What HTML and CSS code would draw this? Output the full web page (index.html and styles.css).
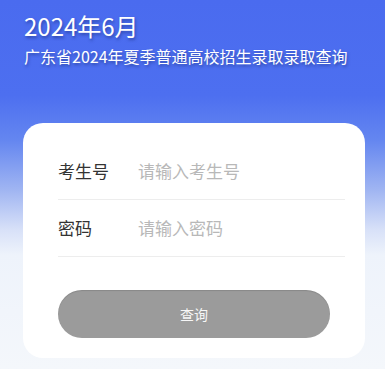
FILE: index.html
```html
<!DOCTYPE html>
<html lang="zh-CN">
<head>
<meta charset="utf-8">
<link rel="stylesheet" href="styles.css">
</head>
<body>
<div class="page">
  <header class="header">
    <h1 class="title">2024年6月</h1>
    <p class="subtitle">广东省2024年夏季普通高校招生录取录取查询</p>
  </header>
  <main class="card">
    <div class="field">
      <span class="label">考生号</span>
      <span class="placeholder">请输入考生号</span>
    </div>
    <div class="field">
      <span class="label">密码</span>
      <span class="placeholder">请输入密码</span>
    </div>
    <div class="actions">
      <button class="btn" type="button">查询</button>
    </div>
  </main>
</div>
</body>
</html>
```

FILE: styles.css
```css
* { box-sizing: border-box; }
html, body { margin: 0; padding: 0; }
body {
  width: 385px;
  height: 369px;
  overflow: hidden;
  font-family: "Noto Sans CJK SC", "Noto Sans", sans-serif;
  background: linear-gradient(180deg,
    #4a6bef 0px,
    #4d6ff0 95px,
    #6486f0 140px,
    #a0b5f2 190px,
    #d8e1f8 230px,
    #eef3fb 255px,
    #f4f7fb 369px);
}
.page {
  display: flex;
  flex-direction: column;
  padding: 0 20px 0 23px;
}
.header {
  padding: 10px 0 0 1px;
  color: #fff;
}
.title {
  margin: 0;
  font-size: 24px;
  line-height: 32px;
  font-weight: 400;
  text-shadow: 1px 2px 3px rgba(20, 40, 110, 0.5);
}
.subtitle {
  margin: 3px 0 0;
  font-size: 16px;
  line-height: 22px;
  text-shadow: 1px 2px 3px rgba(20, 40, 110, 0.5);
}
.card {
  margin-top: 56px;
  width: 342px;
  height: 235px;
  background: #fff;
  border-radius: 20px;
  padding: 20px 20px 0 35px;
  display: flex;
  flex-direction: column;
}
.field {
  height: 57px;
  display: flex;
  align-items: center;
  border-bottom: 1px solid #ededed;
  font-size: 17px;
  padding-bottom: 2px;
}
.label {
  width: 80px;
  color: #333;
}
.placeholder {
  color: #b8b8b8;
}
.actions {
  padding-top: 33px;
  padding-right: 15px;
}
.btn {
  width: 272px;
  height: 48px;
  border: none;
  border-radius: 24px;
  background: #9b9b9b;
  color: #f7f7f7;
  font-family: "Noto Sans CJK SC", sans-serif;
  font-size: 14px;
  box-shadow: inset 0 1px 1px rgba(0,0,0,0.12);
  padding: 0;
}
```
